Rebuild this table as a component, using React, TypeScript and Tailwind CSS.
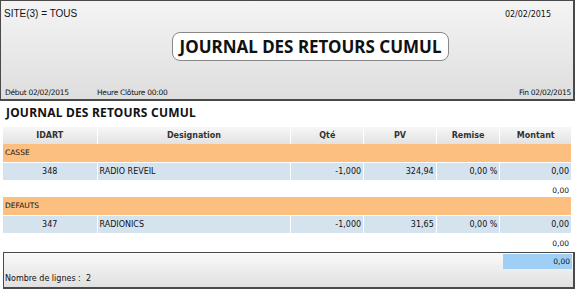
const cols = ['w-[94px]', 'w-[194px]', 'w-[72px]', 'w-[72px]', 'w-[63px]', 'w-[71px]'];

type Line = { id: string; label: string; qte: string; pv: string; remise: string; montant: string };

const groups: { name: string; lines: Line[]; total: string }[] = [
  {
    name: 'CASSE',
    lines: [{ id: '348', label: 'RADIO REVEIL', qte: '-1,000', pv: '324,94', remise: '0,00 %', montant: '0,00' }],
    total: '0,00',
  },
  {
    name: 'DEFAUTS',
    lines: [{ id: '347', label: 'RADIONICS', qte: '-1,000', pv: '31,65', remise: '0,00 %', montant: '0,00' }],
    total: '0,00',
  },
];

const font = { fontFamily: 'Tahoma, "DejaVu Sans", sans-serif' };
const titleFont = { fontFamily: '"Noto Sans", "Open Sans", sans-serif' };

export default function App() {
  const headers = ['IDART', 'Designation', 'Qté', 'PV', 'Remise', 'Montant'];
  return (
    <div className="w-[577px] h-[295px] bg-white text-[#111] overflow-hidden" style={font}>
      {/* en-tête */}
      <div className="w-[575px] h-[101px] border border-[#4a4a4a] border-r-2 border-b-2 bg-gradient-to-b from-[#f4f4f4] to-[#dedede] flex flex-col">
        <div className="flex justify-between items-start pl-[3px] pr-[22px] pt-[8px]">
          <span className="text-[10px] leading-none" style={{ fontFamily: '"Liberation Sans", Arial, sans-serif' }}>SITE(3) = TOUS</span>
          <span className="text-[8px] leading-none pt-[2px]">02/02/2015</span>
        </div>
        <div className="ml-[171px] mt-[13px] w-[277px] h-[29px] rounded-[8px] border border-[#888] bg-white flex items-center justify-center">
          <span className="text-[17px] font-bold leading-none whitespace-nowrap" style={titleFont}>JOURNAL DES RETOURS CUMUL</span>
        </div>
        <div className="mt-auto flex items-end pl-[4px] pr-[2px] pb-[3px] text-[7.5px] leading-none tracking-[-0.3px]">
          <span className="w-[92px]">Début 02/02/2015</span>
          <span>Heure Clôture 00:00</span>
          <span className="ml-auto">Fin 02/02/2015</span>
        </div>
      </div>

      <div className="pl-[6px] pt-[6px] h-[26px] text-[12px] font-bold leading-none whitespace-nowrap tracking-[0.2px]" style={titleFont}>JOURNAL DES RETOURS CUMUL</div>

      {/* tableau */}
      <div className="pl-[3px] w-[571px] text-[8px] leading-none">
        <div className="flex gap-px h-[17px]">
          {headers.map((h, i) => (
            <div key={h} className={`${cols[i]} flex items-center justify-center bg-gradient-to-b from-[#f7f7f7] to-[#e2e2e2] text-[#333] font-bold`}>
              {h}
            </div>
          ))}
        </div>
        {groups.map((g) => (
          <div key={g.name}>
            <div className="h-[18px] bg-[#fdbf80] flex items-center pl-[2px] text-[7.5px]">{g.name}</div>
            {g.lines.map((l) => (
              <div key={l.id} className="mt-px flex gap-px h-[17px]">
                <div className={`${cols[0]} bg-[#d5e3ef] flex items-center justify-center`}>{l.id}</div>
                <div className={`${cols[1]} bg-[#d5e3ef] flex items-center pl-[2px]`}>{l.label}</div>
                <div className={`${cols[2]} bg-[#d5e3ef] flex items-center justify-end pr-[2px]`}>{l.qte}</div>
                <div className={`${cols[3]} bg-[#d5e3ef] flex items-center justify-end pr-[2px]`}>{l.pv}</div>
                <div className={`${cols[4]} bg-[#d5e3ef] flex items-center justify-end pr-[2px]`}>{l.remise}</div>
                <div className={`${cols[5]} bg-[#d5e3ef] flex items-center justify-end pr-[2px]`}>{l.montant}</div>
              </div>
            ))}
            <div className="h-[17px] flex items-end justify-end pr-[2px] pb-[3px] text-[7.5px]">{g.total}</div>
          </div>
        ))}
      </div>

      {/* pied */}
      <div className="mt-[2px] ml-[3px] w-[572px] h-[37px] border border-[#4a4a4a] border-r-2 border-b-2 bg-gradient-to-b from-[#fafafa] to-[#e0e0e0] flex flex-col">
        <div className="flex justify-end pr-[1px] pt-px">
          <div className="w-[69px] h-[15px] bg-[#a0cff6] flex items-center justify-end pr-[2px] text-[7.5px] leading-none">0,00</div>
        </div>
        <div className="mt-auto pb-[4px] pl-[1px] text-[8px] leading-none">Nombre de lignes :&nbsp;&nbsp;2</div>
      </div>
    </div>
  );
}
